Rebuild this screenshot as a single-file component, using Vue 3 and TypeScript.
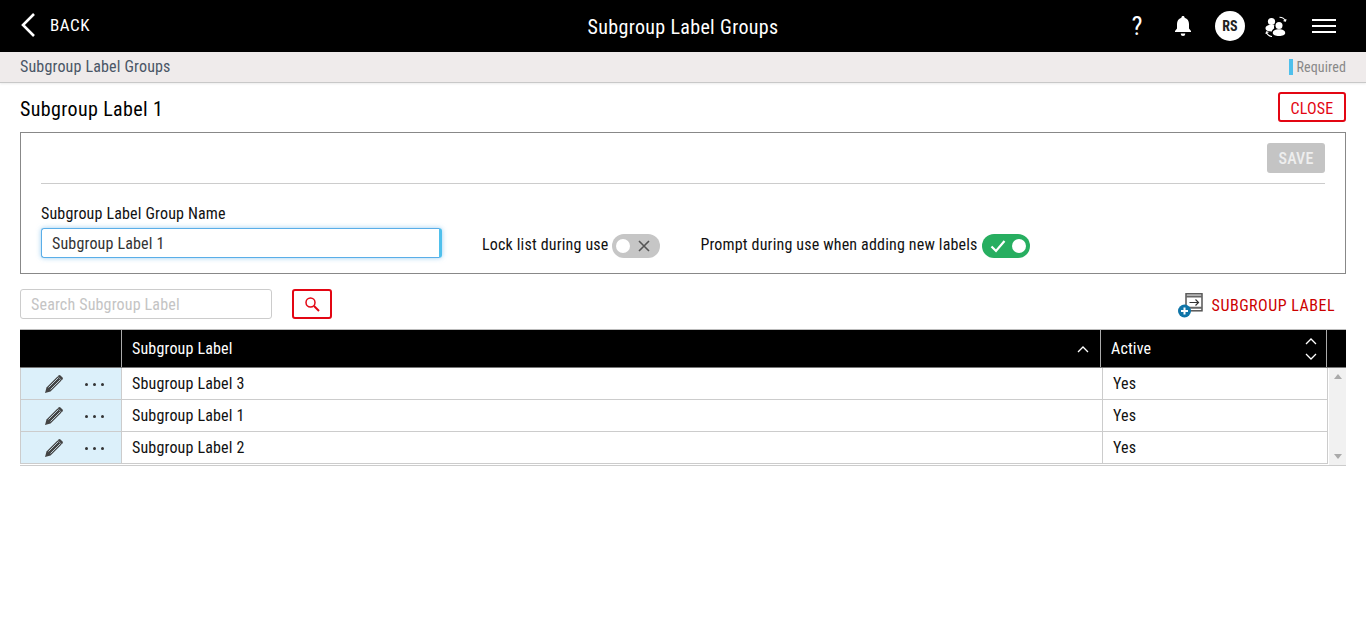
<script setup lang="ts">
const rows: string[] = ['Sbugroup Label 3', 'Subgroup Label 1', 'Subgroup Label 2']
</script>

<template>
  <div class="page">
    <header class="topbar">
      <div class="back">
        <svg width="16" height="26" viewBox="0 0 16 26"><path d="M14 2 3 13l11 11" fill="none" stroke="#fff" stroke-width="2.6" /></svg>
        <span>BACK</span>
      </div>
      <div class="title">Subgroup Label Groups</div>
      <div class="actions">
        <span class="help">?</span>
        <svg class="bell" width="18" height="20" viewBox="0 0 18 20"><path d="M9 0c1 0 1.600.7 1.600 1.700C13.600 2.500 15 5 15 8v4.500l2 2.500v1H1v-1l2-2.500V8c0-3 1.400-5.500 4.400-6.300C7.400.7 8 0 9 0ZM6.800 17.500h4.400A2.200 2.200 0 0 1 9 20a2.200 2.200 0 0 1-2.200-2.500Z" fill="#fff" /></svg>
        <span class="avatar">RS</span>
        <svg class="people" width="22" height="22" viewBox="0 0 22 22">
          <circle cx="6.500" cy="5.500" r="3.600" fill="#fff" />
          <path d="M.5 12.500C.5 10 3 8.800 6.500 8.800c1.200 0 2.300.2 3 .5-.6 1-.7 2-.2 3-1.300.8-2.200 1.900-2.500 3.200-4 0-6.300-1-6.300-3Z" fill="#fff" />
          <circle cx="14" cy="9.500" r="3.500" fill="#fff" />
          <path d="M7.800 17c0-2.500 2.700-3.700 6.200-3.700s6.200 1.200 6.200 3.700c0 1.800-2.700 3-6.200 3s-6.200-1.200-6.200-3Z" fill="#fff" />
          <path d="M14.500 1.200c2.800 0 4.800 1.200 5.800 3.500M18.500 4.700l2 .4.500-2M1.500 16.500c1 2.500 3 3.800 5.500 4M3.500 16.300l-2-.4-.6 2" fill="none" stroke="#fff" stroke-width="1.100" />
        </svg>
        <span class="burger"><i></i><i></i><i></i></span>
      </div>
    </header>

    <div class="crumb">
      <span class="crumb-text">Subgroup Label Groups</span>
      <span class="required">Required</span>
    </div>

    <main class="content">
      <div class="heading">
        <h1>Subgroup Label 1</h1>
        <button class="outline close">CLOSE</button>
      </div>

      <section class="panel">
        <div class="save-row"><button class="save">SAVE</button></div>
        <div class="fields">
          <div class="field">
            <label>Subgroup Label Group Name</label>
            <div class="name-input">Subgroup Label 1</div>
          </div>
          <div class="toggle-group">
            <span class="toggle-label">Lock list during use</span>
            <span class="toggle off">
              <i class="knob"></i>
              <svg width="14" height="14" viewBox="0 0 14 14"><path d="M2 2l10 10M12 2 2 12" stroke="#555" stroke-width="1.600" fill="none" /></svg>
            </span>
          </div>
          <div class="toggle-group">
            <span class="toggle-label">Prompt during use when adding new labels</span>
            <span class="toggle on">
              <svg width="16" height="14" viewBox="0 0 16 14"><path d="M1.500 7.500 6 12l8.500-10" stroke="#fff" stroke-width="2.200" fill="none" /></svg>
              <i class="knob"></i>
            </span>
          </div>
        </div>
      </section>

      <div class="tools">
        <div class="search">Search Subgroup Label</div>
        <button class="outline search-btn">
          <svg width="16" height="16" viewBox="0 0 16 16"><circle cx="6.500" cy="6.500" r="4.500" fill="none" stroke="#e30613" stroke-width="1.500" /><path d="m10 10 5 5" stroke="#e30613" stroke-width="2" /></svg>
        </button>
        <div class="add">
          <svg width="26" height="25" viewBox="0 0 26 25">
            <rect x="8" y=".8" width="16" height="17" fill="#fff" stroke="#555" stroke-width="1.500" />
            <path d="M8 3.500h16M8 14.800h16" stroke="#666" stroke-width="2" />
            <path d="M11.500 9.500h9m-3-3 3 3-3 3" fill="none" stroke="#333" stroke-width="1.200" />
            <circle cx="6.500" cy="18" r="6.500" fill="#0f75a8" />
            <path d="M3 18h7M6.500 14.500v7" stroke="#fff" stroke-width="2" />
          </svg>
          <span class="add-text">SUBGROUP LABEL</span>
        </div>
      </div>

      <div class="table">
        <div class="thead">
          <div class="th actions-col"></div>
          <div class="th name-col">
            <span>Subgroup Label</span>
            <svg width="12" height="8" viewBox="0 0 12 8"><path d="M1 7l5-5 5 5" fill="none" stroke="#fff" stroke-width="1.300" /></svg>
          </div>
          <div class="th active-col">
            <span>Active</span>
            <span class="sort">
              <svg width="12" height="8" viewBox="0 0 12 8"><path d="M1 7l5-5 5 5" fill="none" stroke="#fff" stroke-width="1.300" /></svg>
              <svg width="12" height="8" viewBox="0 0 12 8"><path d="M1 1l5 5 5-5" fill="none" stroke="#fff" stroke-width="1.300" /></svg>
            </span>
          </div>
          <div class="th spacer"></div>
        </div>
        <div class="tbody">
          <div class="rows">
            <div v-for="row in rows" :key="row" class="tr">
              <div class="td actions-col cell-actions">
                <svg width="20" height="20" viewBox="0 0 20 20">
                  <path d="M1 19l1.500-5.500L13.500 2.500l4 4L6.500 17.500Z" fill="#444" />
                  <path d="M4.500 13.500 14 4M6.500 15.500 16 6" stroke="#dcf0fa" stroke-width=".8" />
                  <path d="M14.500 1.500a1.500 1.500 0 0 1 2 0l2 2a1.500 1.500 0 0 1 0 2l-.8.800-4-4Z" fill="#444" />
                </svg>
                <span class="dots"><i></i><i></i><i></i></span>
              </div>
              <div class="td name-col">{{ row }}</div>
              <div class="td active-col">Yes</div>
            </div>
          </div>
          <div class="scroll">
            <i class="up"></i>
            <i class="down"></i>
          </div>
        </div>
      </div>
    </main>
  </div>
</template>

<style>
html, body { margin: 0; background: #fff; }
</style>

<style scoped>
.page {
  font-family: Roboto, "Liberation Sans", sans-serif;
  font-size: 16px;
  font-stretch: 85%;
  letter-spacing: .17px;
  color: #111;
}
.topbar {
  height: 52px;
  background: #000;
  color: #fff;
  display: grid;
  grid-template-columns: 1fr auto 1fr;
  align-items: center;
}
.back { display: flex; align-items: center; gap: 14px; padding-left: 20px; font-size: 17px; letter-spacing: .5px; margin-top: -3px; }
.title { font-size: 20px; letter-spacing: .34px; margin-top: 2px; }
.actions { display: flex; align-items: center; justify-content: flex-end; padding-right: 30px; }
.help { font-size: 26px; width: 18px; text-align: center; margin-right: 28px; }
.bell { margin-right: 23px; }
.avatar {
  width: 30px; height: 30px; border-radius: 50%;
  background: #fff; color: #222; font-weight: 700; font-size: 14px;
  display: flex; align-items: center; justify-content: center;
  margin-right: 20px;
}
.people { margin-right: 25px; margin-top: 2px; }
.burger { display: flex; flex-direction: column; gap: 4px; width: 24px; }
.burger i { display: block; height: 2px; background: #fff; }
.crumb {
  height: 30px;
  background: #efebeb;
  border-bottom: 1px solid #c8c8c8;
  box-shadow: 0 1px 2px rgba(0,0,0,.08);
  display: flex;
  align-items: center;
  justify-content: space-between;
  padding: 0 20px;
  color: #4a5666;
  font-size: 16px;
}
.crumb-text { margin-top: -2px; }
.required {
  color: #888;
  font-size: 14px;
  letter-spacing: .1px;
  border-left: 4px solid #4fc0ec;
  padding-left: 4px;
  line-height: 16px;
}
.content { padding: 0 20px; }
.heading {
  height: 49px;
  display: flex;
  align-items: center;
  justify-content: space-between;
  box-sizing: border-box;
}
h1 { margin: 2px 0 0; font-size: 20px; font-weight: 400; letter-spacing: .37px; color: #000; }
button { font-family: inherit; font-stretch: inherit; letter-spacing: inherit; cursor: pointer; }
.outline {
  border: 2px solid #e30613;
  border-radius: 3px;
  background: #fff;
  color: #e30613;
}
.close { width: 68px; height: 30px; font-size: 16px; padding: 2px 0 0; margin-top: -1px; }
.panel {
  border: 1px solid #888;
  height: 142px;
  box-sizing: border-box;
  padding: 10px 20px 0;
}
.save-row { display: flex; justify-content: flex-end; height: 40px; border-bottom: 1px solid #ccc; }
.save {
  width: 58px; height: 30px; border: 0; border-radius: 3px;
  background: #c4c4c4; color: #eee; font-size: 16px; font-weight: 500; padding: 0;
}
.fields { display: flex; align-items: flex-end; padding-top: 20px; }
.field { display: flex; flex-direction: column; gap: 5px; margin-right: 40px; }
label { font-size: 16px; line-height: 19px; }
.name-input {
  width: 401px; height: 30px; box-sizing: border-box;
  border: 1px solid #5aaee8;
  border-right: 3px solid #4fc0ec;
  border-radius: 3px;
  box-shadow: 0 0 5px rgba(90,174,232,.6);
  padding: 0 10px;
  display: flex; align-items: center;
  color: #333;
}
.toggle-group { display: flex; align-items: center; gap: 4px; margin-right: 40px; height: 26px; }
.toggle-label { margin-top: -2px; }
.toggle {
  width: 48px; height: 24px; border-radius: 12px;
  display: flex; align-items: center; justify-content: space-between;
  padding: 0 9px 0 4px; box-sizing: border-box;
  margin-top: 2px;
}
.toggle.off { background: #c6c6c6; }
.toggle.on { background: #27ae60; padding: 0 4px 0 8px; }
.knob { width: 14px; height: 14px; border-radius: 50%; background: #fff; display: block; }
.tools { display: flex; align-items: center; height: 30px; margin-top: 15px; }
.search {
  width: 252px; height: 30px; box-sizing: border-box;
  border: 1px solid #ccc; border-radius: 3px;
  color: #c4c4c4; padding: 0 10px;
  display: flex; align-items: center;
}
.search-btn { width: 40px; height: 30px; margin-left: 20px; padding: 0; display: flex; align-items: center; justify-content: center; }
.add { margin-left: auto; display: flex; align-items: center; gap: 8px; color: #c00; padding-right: 11px; font-size: 16px; letter-spacing: .5px; }
.add svg { margin-top: 3px; }
.add-text { margin-top: 2px; }
.table { margin-top: 10px; border-top: 1px solid #bbb; border-bottom: 1px solid #ccc; height: 137px; box-sizing: border-box; }
.thead { display: flex; height: 38px; background: #000; color: #fff; border-bottom: 1px solid #777; box-sizing: border-box; }
.th { display: flex; align-items: center; border-right: 1px solid #aaa; box-sizing: border-box; }
.actions-col { width: 102px; flex: none; box-sizing: border-box; }
.name-col { width: 979px; flex: none; padding: 0 11px 0 10px; box-sizing: border-box; justify-content: space-between; }
.active-col { width: 226px; flex: none; padding: 0 10px; box-sizing: border-box; justify-content: space-between; }
.spacer { border: 0; flex: 1; }
.sort { display: flex; flex-direction: column; gap: 8px; margin-right: -1px; }
.sort svg { display: block; }
.tbody { display: flex; }
.rows { width: 1307px; border-right: 1px solid #ccc; flex: none; height: 96px; }
.rows .name-col { width: 981px; }
.rows .active-col { width: 224px; }
.tr { display: flex; height: 32px; border-bottom: 1px solid #ccc; box-sizing: border-box; }
.td { display: flex; align-items: center; border-right: 1px solid #ccc; box-sizing: border-box; }
.td.active-col { border-right: 0; }
.cell-actions { background: #dcf0fa; border-left: 1px solid #ccc; padding-left: 23px; gap: 21px; }
.dots { display: flex; gap: 5px; margin-top: 2px; }
.dots i { width: 3px; height: 3px; border-radius: 50%; background: #333; display: block; }
.scroll {
  flex: 1; background: #f1f1f1; margin-left: 1px; height: 97px;
  display: flex; flex-direction: column; justify-content: space-between; align-items: center;
  padding: 6px 0; box-sizing: border-box;
}
.up, .down { width: 0; height: 0; border-left: 4px solid transparent; border-right: 4px solid transparent; display: block; }
.up { border-bottom: 5px solid #aaa; }
.down { border-top: 5px solid #aaa; }
</style>
